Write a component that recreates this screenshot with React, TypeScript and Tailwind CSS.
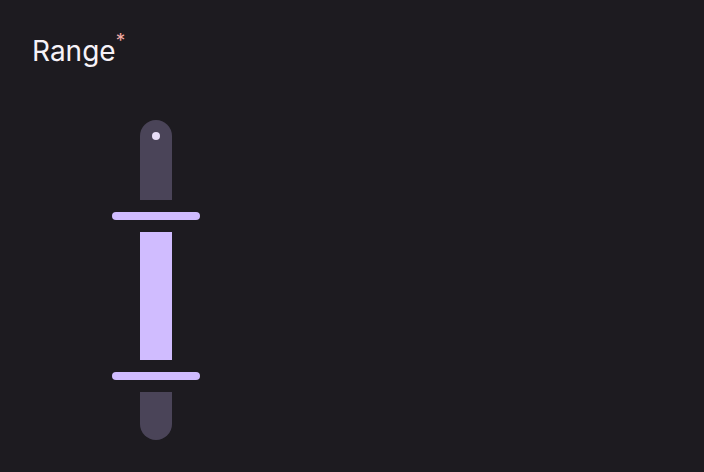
export default function App() {
  return (
    <div
      className="min-h-screen w-full bg-[#1d1b20] px-8 pt-[33px]"
      style={{ fontFamily: 'Inter, Roboto, "Noto Sans", sans-serif' }}
    >
      <label className="flex items-start text-[28px] leading-9 text-[#f7f3f8]">
        <span>Range</span>
        <span className="-mt-0.5 text-[19px] leading-5 text-[#f2aaa4]">*</span>
      </label>

      <div className="ml-[80px] mt-[51px] flex w-[88px] flex-col items-center">
        {/* upper inactive track with stop indicator */}
        <div className="flex h-[80px] w-8 justify-center rounded-t-full bg-[#4a4458] pt-3">
          <div className="h-2 w-2 rounded-full bg-[#e8def8]" />
        </div>
        {/* upper handle */}
        <div className="my-3 h-2 w-[88px] rounded-full bg-[#d0bcff]" />
        {/* active range */}
        <div className="h-[128px] w-8 bg-[#d0bcff]" />
        {/* lower handle */}
        <div className="my-3 h-2 w-[88px] rounded-full bg-[#d0bcff]" />
        {/* lower inactive track */}
        <div className="h-[48px] w-8 rounded-b-full bg-[#4a4458]" />
      </div>
    </div>
  );
}
